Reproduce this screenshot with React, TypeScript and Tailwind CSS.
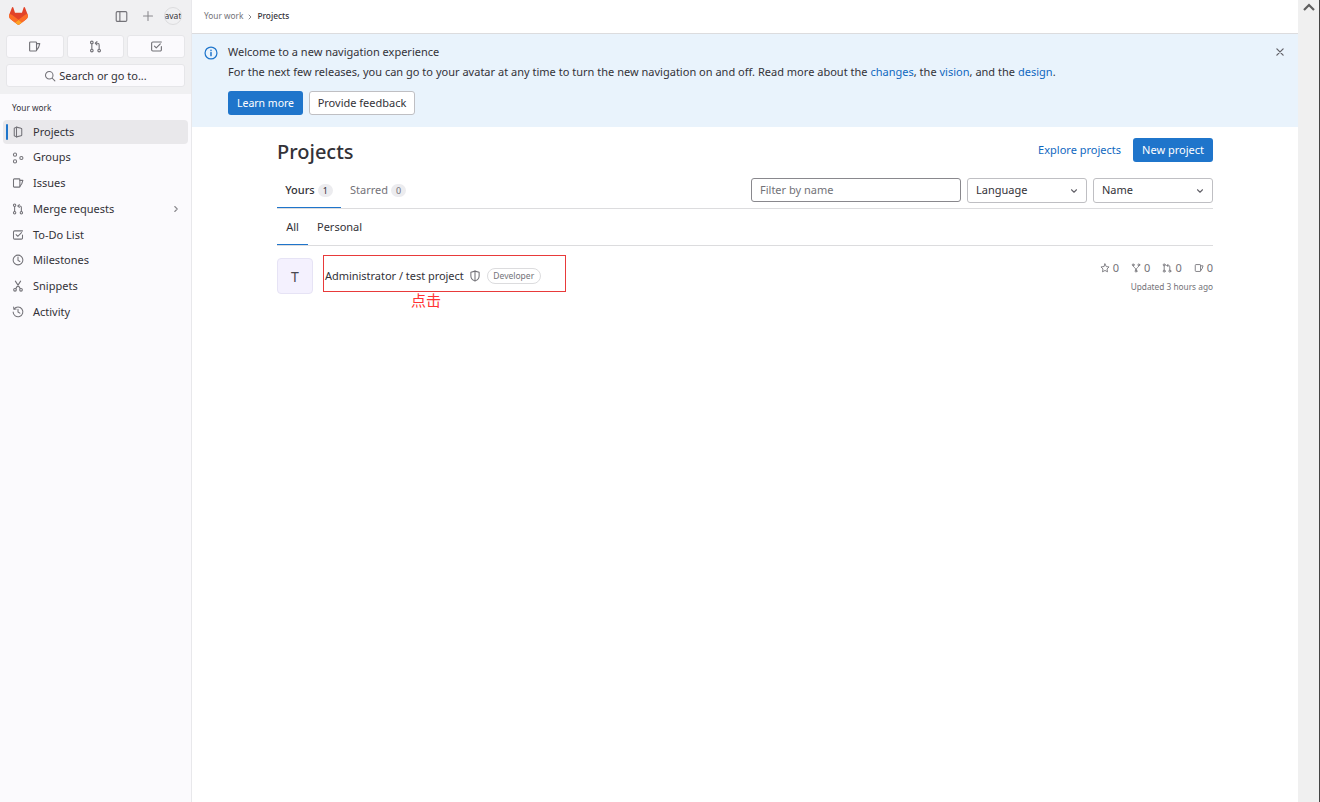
import React from "react";

const S = ({ children, size = 16, className = "" }: { children: React.ReactNode; size?: number; className?: string }) => (
  <svg width={size} height={size} viewBox="0 0 16 16" fill="none" stroke="currentColor" strokeWidth={1.4} strokeLinecap="round" strokeLinejoin="round" className={`shrink-0 ${className}`}>
    {children}
  </svg>
);

type IP = { size?: number; className?: string };

const IssueIcon = (p: IP) => (
  <S {...p}>
    <path d="M2 3.500a1 1 0 0 1 1-1h6.500a1 1 0 0 1 1 1v9a1 1 0 0 1-1 1H3a1 1 0 0 1-1-1z" />
    <path d="M10.500 4.500H14.500l-1.500 4.500-2.500 3.500" />
  </S>
);
const MergeIcon = (p: IP) => (
  <S {...p}>
    <circle cx="3.500" cy="3" r="1.600" />
    <circle cx="3.500" cy="13" r="1.600" />
    <circle cx="12.500" cy="13" r="1.600" />
    <path d="M3.500 4.600v6.800M12.500 11.400V6a2 2 0 0 0-2-2H8" />
    <path d="M9.800 2 7.800 4l2 2" />
  </S>
);
const TodoIcon = (p: IP) => (
  <S {...p}>
    <path d="M14 8v4a1.500 1.500 0 0 1-1.500 1.500h-9A1.500 1.500 0 0 1 2 12V4a1.500 1.500 0 0 1 1.500-1.500H14" />
    <path d="m5.500 7.500 2.200 2.200 5-5" />
  </S>
);
const ProjectIcon = (p: IP) => (
  <S {...p}>
    <path d="M6 1.500 12 3a1 1 0 0 1 1 1v8a1 1 0 0 1-1 1l-6 1.500L3 13V3z" />
    <path d="M6 1.500v13" />
  </S>
);
const GroupIcon = (p: IP) => (
  <S {...p}>
    <circle cx="4" cy="3.500" r="2.100" />
    <circle cx="4" cy="12.500" r="2.100" />
    <circle cx="12.500" cy="8" r="2.100" />
  </S>
);
const ClockIcon = (p: IP) => (
  <S {...p}>
    <circle cx="8" cy="8" r="6.500" />
    <path d="M8 4v4.500l2.500 1.500" />
  </S>
);
const SnippetIcon = (p: IP) => (
  <S {...p}>
    <circle cx="4" cy="13" r="1.800" />
    <circle cx="12" cy="13" r="1.800" />
    <path d="M4.500 1.500 11 11.500M11.500 1.500 5 11.500" />
  </S>
);
const HistoryIcon = (p: IP) => (
  <S {...p}>
    <path d="M2.800 4A6.500 6.500 0 1 1 1.500 8" />
    <path d="M2.200 1.500 2.600 4.400l2.900-.3" />
    <path d="M8 4.500V8l2.500 1.500" />
  </S>
);
const Chevron = ({ size = 12, className = "" }: IP) => (
  <S size={size} className={className}>
    <path d="m4 6 4 4 4-4" strokeWidth={1.7} />
  </S>
);

const navItems: [string, (p: IP) => React.ReactElement][] = [
  ["Projects", ProjectIcon],
  ["Groups", GroupIcon],
  ["Issues", IssueIcon],
  ["Merge requests", MergeIcon],
  ["To-Do List", TodoIcon],
  ["Milestones", ClockIcon],
  ["Snippets", SnippetIcon],
  ["Activity", HistoryIcon],
];

function Sidebar() {
  return (
    <aside className="flex h-full w-[192px] shrink-0 flex-col border-r border-[#e8e8eb] bg-[#fbfafd]">
      <div className="flex h-[94px] flex-col bg-[#f0f0f2] px-[6px] pt-[7px]">
        <div className="flex h-[18px] items-center">
          <svg width="19" height="18" viewBox="0 0 25 24" className="ml-[3px] shrink-0">
            <path d="m24.507 9.5-.034-.09L21.082.562a.896.896 0 0 0-1.694.091l-2.29 7.01H7.825L5.535.653a.898.898 0 0 0-1.694-.09L.451 9.411.416 9.5a6.297 6.297 0 0 0 2.09 7.278l.012.01.03.022 5.16 3.867 2.56 1.935 1.554 1.176a1.051 1.051 0 0 0 1.268 0l1.555-1.176 2.56-1.935 5.197-3.89.014-.01A6.297 6.297 0 0 0 24.507 9.5Z" fill="#E24329" />
            <path d="m24.507 9.5-.034-.09a11.44 11.44 0 0 0-4.56 2.051l-7.447 5.632 4.742 3.584 5.197-3.89.014-.01A6.297 6.297 0 0 0 24.507 9.5Z" fill="#FC6D26" />
            <path d="m7.707 20.677 2.56 1.935 1.555 1.176a1.051 1.051 0 0 0 1.268 0l1.555-1.176 2.56-1.935-4.743-3.584-4.755 3.584Z" fill="#FCA326" />
            <path d="M5.01 11.461a11.43 11.43 0 0 0-4.56-2.05L.416 9.5a6.297 6.297 0 0 0 2.09 7.278l.012.01.03.022 5.16 3.867 4.745-3.584-7.444-5.632Z" fill="#FC6D26" />
          </svg>
          <S size={13} className="ml-[87px] text-[#737278]">
            <rect x="1.500" y="2" width="13" height="12" rx="1.500" />
            <path d="M6 2v12" />
          </S>
          <S size={12} className="ml-[14px] text-[#89888d]">
            <path d="M8 2v12M2 8h12" />
          </S>
          <div className="ml-[10px] flex h-[18px] w-[18px] items-center justify-center overflow-hidden rounded-full border border-[#dcdcde] text-[8.500px] leading-none text-[#333238]">
            avat
          </div>
        </div>
        <div className="mt-[10px] grid grid-cols-3 gap-[3px]">
          {[IssueIcon, MergeIcon, TodoIcon].map((I, i) => (
            <div key={i} className="flex h-[23px] items-center justify-center rounded-[3px] border border-[#e6e6e9] bg-[#fbfafd] text-[#737278]">
              <I size={13} />
            </div>
          ))}
        </div>
        <div className="mt-[6px] flex h-[23px] items-center justify-center gap-[3px] rounded-[3px] border border-[#e6e6e9] bg-[#fbfafd] text-[11px] text-[#333238]">
          <S size={12} className="text-[#737278]">
            <circle cx="7" cy="7" r="5" />
            <path d="m11 11 3.500 3.500" />
          </S>
          <span className="pt-[1px]">Search or go to...</span>
        </div>
      </div>
      <div className="mt-[7px] h-[13px] pl-[12px] text-[8.300px] leading-[13px] text-[#333238]">Your work</div>
      <nav className="mt-[6px] flex flex-col gap-[1.700px] px-[3px]">
        {navItems.map(([label, Icon], i) => (
          <div key={label} className={`relative flex h-6 items-center rounded-[4px] pl-[9px] text-[#333238] ${i === 0 ? "bg-[#e9e8eb]" : ""}`}>
            {i === 0 && <span className="absolute left-[3px] top-[4px] h-4 w-[2px] rounded bg-[#1f75cb]" />}
            <Icon size={12} className="text-[#737278]" />
            <span className="ml-[9px] text-[11px]">{label}</span>
            {label === "Merge requests" && (
              <Chevron size={10} className="absolute right-[7px] top-[7px] -rotate-90 text-[#89888d]" />
            )}
          </div>
        ))}
      </nav>
    </aside>
  );
}

function Banner() {
  return (
    <div className="relative flex h-[93px] bg-[#e9f3fc] pl-[12px] pt-[10px]">
      <S size={14} className="mt-[2px] text-[#1f75cb]">
        <circle cx="8" cy="8" r="6.800" />
        <path d="M8 7.500v3.500M8 4.800v.4" strokeWidth={1.700} />
      </S>
      <div className="ml-[10px] text-[#333238]">
        <div className="h-4 text-[11px] leading-4">Welcome to a new navigation experience</div>
        <div className="mt-1 h-4 text-[11px] leading-4 tracking-[0.012px]">
          For the next few releases, you can go to your avatar at any time to turn the new navigation on and off. Read more about the{" "}
          <span className="text-[#1068bf]">changes</span>, the <span className="text-[#1068bf]">vision</span>, and the{" "}
          <span className="text-[#1068bf]">design</span>.
        </div>
        <div className="mt-[11px] flex gap-[6px]">
          <div className="flex h-6 w-[75px] items-center justify-center rounded-[3px] bg-[#1f75cb] pt-[1px] text-[10.500px] text-white">Learn more</div>
          <div className="flex h-6 w-[106px] items-center justify-center rounded-[3px] border border-[#bfbfc3] bg-white text-[11px]">Provide feedback</div>
        </div>
      </div>
      <S size={10} className="absolute right-[13px] top-[13px] text-[#626168]">
        <path d="m3 3 10 10M13 3 3 13" strokeWidth={2} />
      </S>
    </div>
  );
}

function Select({ label, w }: { label: string; w: string }) {
  return (
    <div className={`flex h-[25px] items-center justify-between rounded-[3px] border border-[#bfbfc3] bg-white pl-2 pr-[7px] text-[11px] text-[#333238] ${w}`}>
      {label}
      <Chevron size={10} className="text-[#626168]" />
    </div>
  );
}

function Stat({ children, n }: { children: React.ReactNode; n: string }) {
  return (
    <span className="flex items-center gap-[3px] text-[11px] leading-none text-[#737278]">
      {children}
      {n}
    </span>
  );
}

function Content() {
  return (
    <div className="mx-auto w-[936px] text-[#333238]">
      <div className="flex items-start justify-between pt-[11px]">
        <h1 className="text-[20px] font-medium leading-[27px]">Projects</h1>
        <div className="flex items-center gap-3">
          <span className="text-[11px] text-[#1068bf]">Explore projects</span>
          <div className="flex h-6 w-20 items-center justify-center rounded-[3px] bg-[#1f75cb] text-[11px] text-white">New project</div>
        </div>
      </div>
      <div className="mt-[7px] flex h-[37px] justify-between border-b border-[#dcdcde]">
        <div className="flex text-[11px]">
          <div className="flex h-[36px] w-16 items-center justify-center gap-[3px] border-b border-[#1f75cb] pt-[1px]">
            <span className="font-medium">Yours</span>
            <span className="rounded-full bg-[#ececef] px-[5px] text-[9px] leading-[13px]">1</span>
          </div>
          <div className="ml-[9px] flex h-[36px] items-center gap-[3px] text-[#737278]">
            Starred
            <span className="rounded-full bg-[#ececef] px-[5px] text-[9px] leading-[13px]">0</span>
          </div>
        </div>
        <div className="flex gap-[6px] pt-[6px]">
          <div className="flex h-6 w-[210px] items-center rounded-[3px] border border-[#89888d] pl-2 text-[11px] text-[#737278]">Filter by name</div>
          <Select label="Language" w="w-[120px]" />
          <Select label="Name" w="w-[120px]" />
        </div>
      </div>
      <div className="flex h-[37px] border-b border-[#dcdcde] text-[11px]">
        <div className="flex h-[36px] w-[31px] items-center justify-center border-b border-[#1f75cb] pt-[1px]">All</div>
        <div className="ml-[9px] flex h-[36px] items-center">Personal</div>
      </div>
      <div className="flex items-start justify-between pt-[9px]">
        <div className="flex items-start">
          <div className="mt-[3px] flex h-9 w-9 items-center justify-center rounded-[4px] border border-[#e6e3f5] bg-[#f4f1fe] text-[14px] text-[#4a4950]">T</div>
          <div className="ml-[10px]">
            <div className="flex h-[37px] w-[243px] items-center border border-[#e83a3a] pl-[1px] pt-[5px]">
              <span className="text-[11px] tracking-[-0.03px]">Administrator / test project</span>
              <S size={12} className="ml-[5px] text-[#737278]">
                <path d="M8 1.500 13.500 3v5c0 3-2.500 5.500-5.500 6.500C5 13.500 2.500 11 2.500 8V3z" />
                <path d="M8 1.500v13" />
              </S>
              <span className="ml-[6px] flex h-4 w-[54px] items-center justify-center rounded-full border border-[#dcdcde] text-[8.500px] text-[#737278]">Developer</span>
            </div>
            <div className="ml-[88px] text-[15px] leading-[16px] text-[#ff3333] [font-family:'Noto_Sans_CJK_SC',sans-serif]">点击</div>
          </div>
        </div>
        <div className="flex flex-col items-end pt-[7px]">
          <div className="flex h-[11px] items-center gap-[12px]">
            <Stat n="0">
              <S size={10}><path d="m8 1.500 2 4.200 4.500.6-3.300 3.200.8 4.600L8 11.900 4 14.100l.8-4.600L1.500 6.300l4.500-.6z" /></S>
            </Stat>
            <Stat n="0">
              <S size={10}><circle cx="3.500" cy="3" r="1.500" /><circle cx="12.500" cy="3" r="1.500" /><circle cx="8" cy="13" r="1.500" /><path d="M3.500 4.500c0 3 4.500 2.500 4.500 7M12.500 4.500c0 3-4.500 2.500-4.500 7" /></S>
            </Stat>
            <Stat n="0"><MergeIcon size={10} /></Stat>
            <Stat n="0"><IssueIcon size={10} /></Stat>
          </div>
          <div className="mt-[8px] text-[8.300px] leading-[11px] text-[#737278]">Updated 3 hours ago</div>
        </div>
      </div>
    </div>
  );
}

export default function App() {
  return (
    <div className="flex h-[802px] w-[1320px] overflow-hidden bg-white [font-family:'Noto_Sans',sans-serif]">
      <Sidebar />
      <main className="flex min-w-0 flex-1 flex-col">
        <div className="flex h-[34px] shrink-0 items-center gap-[3px] border-b border-[#dcdcde] pl-3 text-[8.300px]">
          <span className="text-[#737278]">Your work</span>
          <Chevron size={8} className="-rotate-90 text-[#737278]" />
          <span className="font-medium text-[#333238]">Projects</span>
        </div>
        <Banner />
        <Content />
      </main>
      <div className="flex h-full w-[22px] shrink-0 justify-center border-r border-[#444444] bg-[#f0f0f0] pt-[3px]">
        <svg width="12" height="8" viewBox="0 0 12 8"><path d="M1 7 6 2l5 5" fill="none" stroke="#5f5f5f" strokeWidth="2.200" /></svg>
      </div>
    </div>
  );
}
